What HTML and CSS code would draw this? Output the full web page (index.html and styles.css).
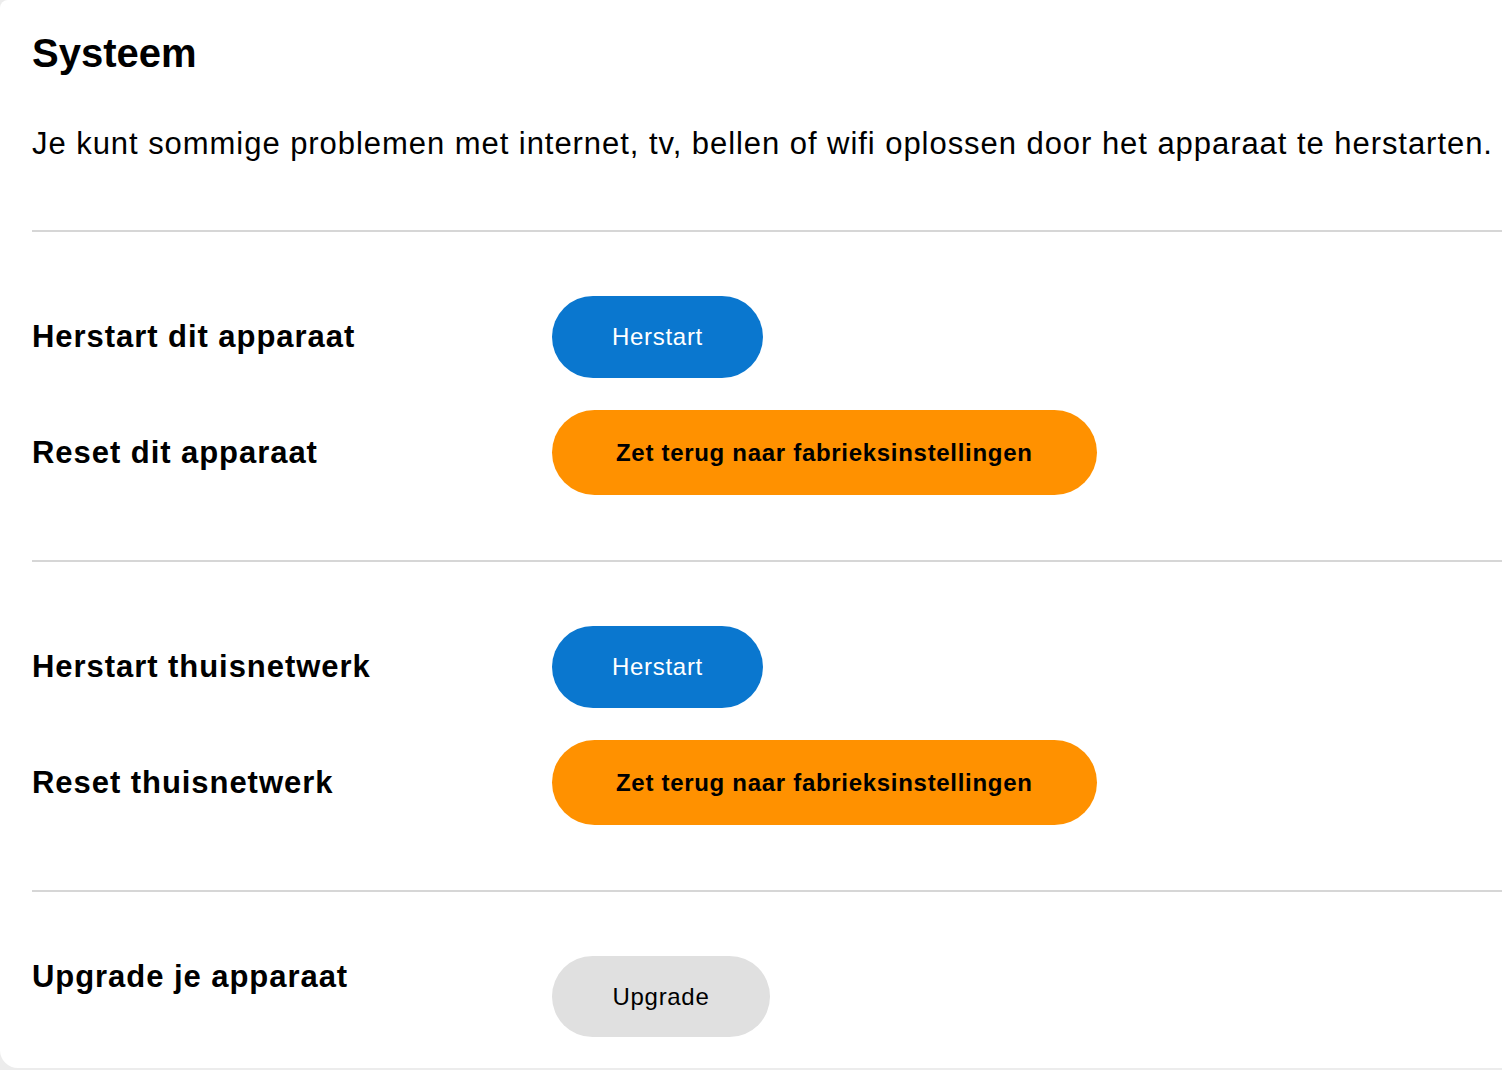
FILE: index.html
```html
<!DOCTYPE html>
<html lang="nl">
<head>
<meta charset="utf-8">
<title>Systeem</title>
<link rel="stylesheet" href="styles.css">
</head>
<body>
<main class="card">
  <h1 class="title">Systeem</h1>
  <p class="intro">Je kunt sommige problemen met internet, tv, bellen of wifi oplossen door het apparaat te herstarten.</p>

  <section class="group">
    <div class="row">
      <div class="label">Herstart dit apparaat</div>
      <button class="btn btn-blue">Herstart</button>
    </div>
    <div class="row">
      <div class="label">Reset dit apparaat</div>
      <button class="btn btn-orange">Zet terug naar fabrieksinstellingen</button>
    </div>
  </section>

  <section class="group">
    <div class="row">
      <div class="label">Herstart thuisnetwerk</div>
      <button class="btn btn-blue">Herstart</button>
    </div>
    <div class="row">
      <div class="label">Reset thuisnetwerk</div>
      <button class="btn btn-orange">Zet terug naar fabrieksinstellingen</button>
    </div>
  </section>

  <section class="group group-last">
    <div class="row row-top">
      <div class="label label-top">Upgrade je apparaat</div>
      <button class="btn btn-grey">Upgrade</button>
    </div>
  </section>
</main>
</body>
</html>
```

FILE: styles.css
```css
html, body {
  margin: 0;
  padding: 0;
}
body {
  background: #ececec;
  font-family: "Liberation Sans", Arial, Helvetica, sans-serif;
  color: #000;
  overflow: hidden;
}
.card {
  background: #fff;
  height: 1068px;
  box-sizing: border-box;
  padding: 29px 0 0 32px;
  border-radius: 8px 0 0 18px;
}
.title {
  margin: 0;
  font-size: 40px;
  line-height: 48px;
  font-weight: 700;
}
.intro {
  margin: 49px 0 0;
  font-size: 31px;
  line-height: 36px;
  letter-spacing: 0.95px;
  white-space: nowrap;
}
.group {
  border-top: 2px solid #d6d6d6;
  padding: 64px 0 65px;
  display: flex;
  flex-direction: column;
  gap: 32px;
}
.intro + .group {
  margin-top: 68px;
}
.group-last {
  padding-bottom: 0;
}
.row {
  display: flex;
  align-items: center;
}
.row-top {
  align-items: flex-start;
}
.label {
  width: 520px;
  flex: none;
  font-size: 31px;
  line-height: 36px;
  font-weight: 700;
  letter-spacing: 0.95px;
}
.label-top {
  margin-top: 3px;
}
.btn {
  border: none;
  border-radius: 999px;
  font-family: "Liberation Sans", Arial, Helvetica, sans-serif;
  font-size: 24px;
  letter-spacing: 0.7px;
  padding: 0 60px;
  cursor: pointer;
}
.btn-blue {
  height: 82px;
  padding: 0 60px;
  background: #0a77cf;
  color: #fff;
}
.btn-orange {
  height: 85px;
  padding: 0 64px;
  background: #ff9100;
  color: #000;
  font-weight: 700;
}
.btn-grey {
  height: 81px;
  padding: 0 60.5px;
  background: #e0e0e0;
  color: #000;
}
```
